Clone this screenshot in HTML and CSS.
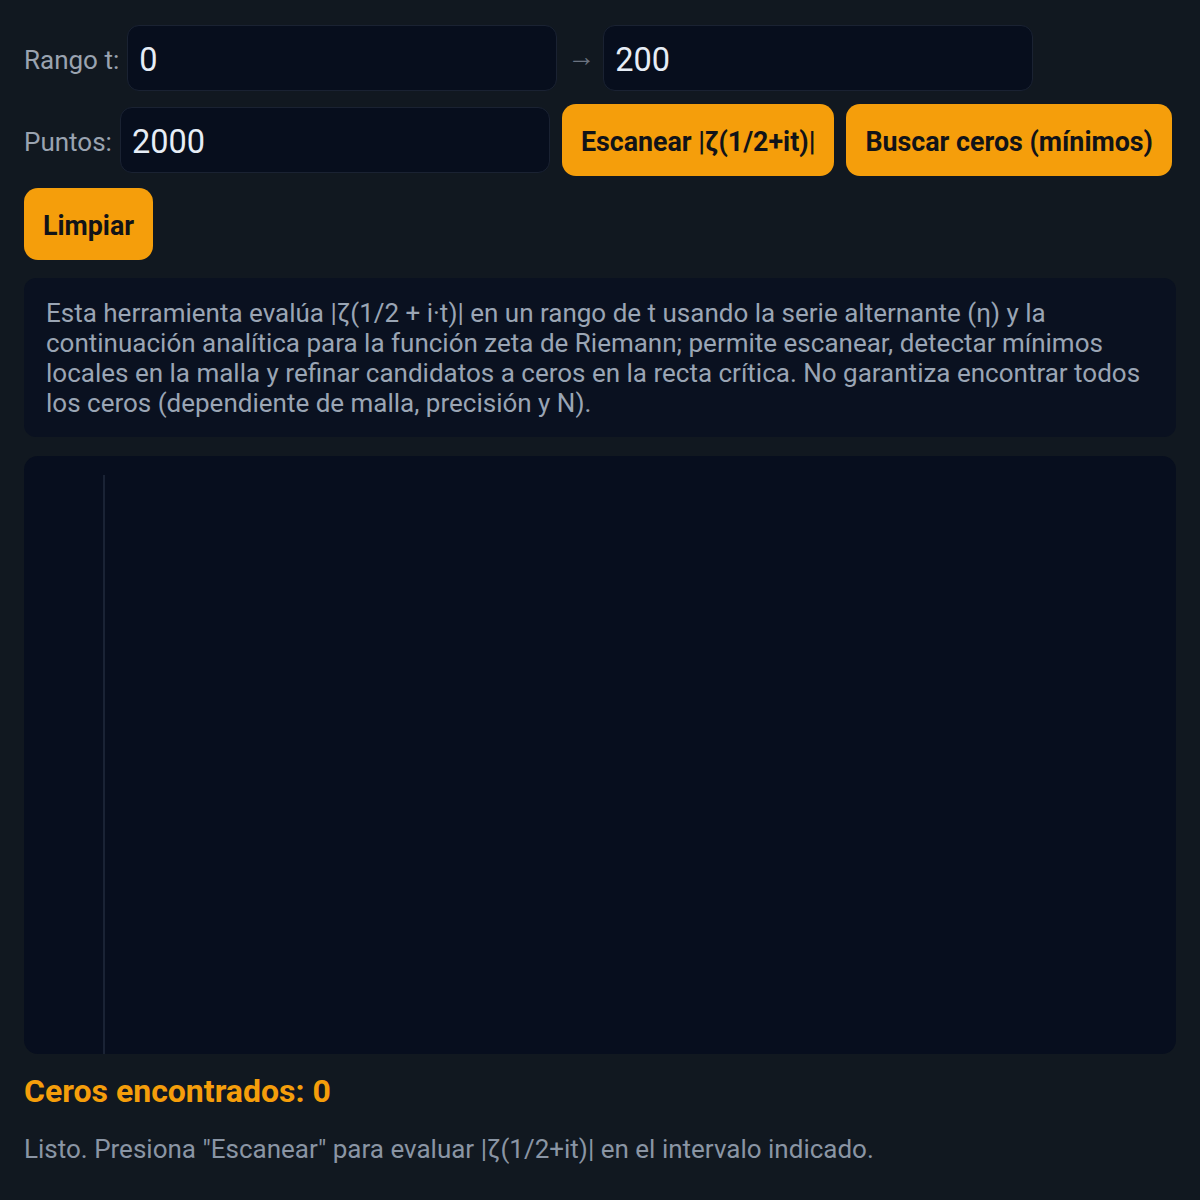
FILE: index.html
```html
<!DOCTYPE html>
<html lang="es">
<head>
<meta charset="utf-8">
<title>Ceros de zeta</title>
<link rel="stylesheet" href="styles.css">
</head>
<body>
<div class="controls">
  <label class="field"><span class="lbl">Rango t:</span><input class="inp" type="text" value="0"></label>
  <label class="field"><span class="lbl arrow">→</span><input class="inp" type="text" value="200"></label>
  <label class="field"><span class="lbl">Puntos:</span><input class="inp" type="text" value="2000"></label>
  <button class="btn">Escanear |ζ(1/2+it)|</button>
  <button class="btn">Buscar ceros (mínimos)</button>
  <button class="btn">Limpiar</button>
</div>
<div class="info">Esta herramienta evalúa |ζ(1/2 + i·t)| en un rango de t usando la serie alternante (η) y la continuación analítica para la función zeta de Riemann; permite escanear, detectar mínimos locales en la malla y refinar candidatos a ceros en la recta crítica. No garantiza encontrar todos los ceros (dependiente de malla, precisión y N).</div>
<div class="chart">
  <svg class="plot" width="1152" height="598" viewBox="0 0 1152 598">
    <line x1="80" y1="19" x2="80" y2="598" stroke="#1a2335" stroke-width="2"/>
  </svg>
</div>
<h2 class="count">Ceros encontrados: 0</h2>
<p class="status">Listo. Presiona "Escanear" para evaluar |ζ(1/2+it)| en el intervalo indicado.</p>
</body>
</html>
```
FILE: styles.css
```css
html, body {
  margin: 0;
  background: #111820;
}
body {
  padding: 24px;
  font-family: Roboto, "Liberation Sans", sans-serif;
  color: #9aa5b4;
}
.controls {
  display: flex;
  flex-wrap: wrap;
  align-items: center;
  gap: 12px;
}
.field {
  display: flex;
  align-items: center;
  gap: 8px;
  min-height: 68px;
}
.lbl {
  font-size: 26px;
  color: #9aa3b0;
  padding-top: 3px;
}
.arrow {
  color: #6b7380;
  font-size: 28px;
  padding-top: 0;
  padding-bottom: 4px;
  margin-left: -2px;
}
.inp {
  box-sizing: border-box;
  width: 430px;
  height: 66px;
  background: #070e1d;
  border: 1px solid #1a2232;
  border-radius: 12px;
  color: #e6edf6;
  font-family: Roboto, "Liberation Sans", sans-serif;
  font-size: 32.5px;
  padding: 3px 11px 0;
  outline: none;
}
.btn {
  height: 72px;
  padding: 3px 19px 0;
  background: #f59e0b;
  border: none;
  border-radius: 14px;
  color: #111318;
  font-family: Roboto, "Liberation Sans", sans-serif;
  font-weight: 700;
  font-size: 26.8px;
  cursor: pointer;
}
.info {
  margin-top: 18px;
  background: #0a1120;
  border-radius: 12px;
  padding: 20px 22px 19px;
  font-size: 26px;
  line-height: 30px;
  color: #9aa5b4;
}
.chart {
  margin-top: 19px;
  height: 598px;
  background: #070e1e;
  border-radius: 14px;
  overflow: hidden;
}
.plot {
  display: block;
}
.count {
  margin: 19px 0 0;
  font-size: 32px;
  line-height: 37px;
  font-weight: 700;
  color: #f59e0b;
}
.status {
  margin: 24px 0 0;
  font-size: 26px;
  line-height: 30px;
  color: #8a95a4;
}
```
